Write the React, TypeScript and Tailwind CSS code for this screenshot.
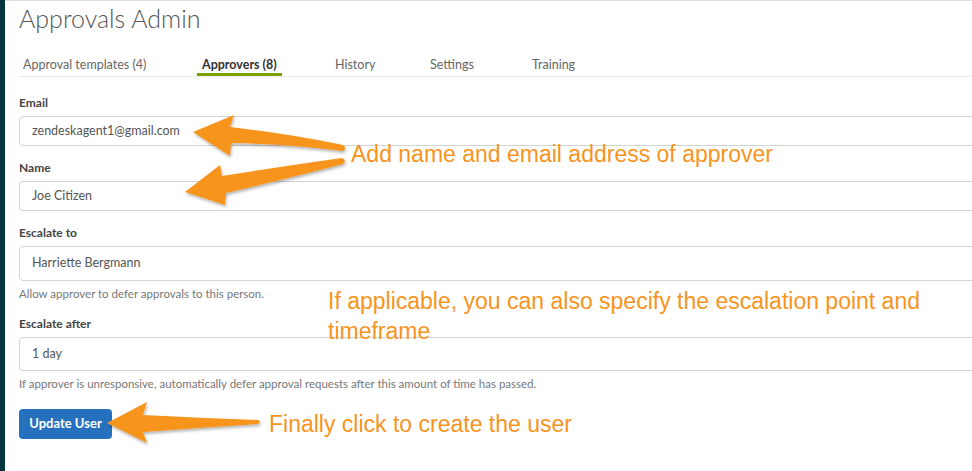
const tabs = [
  { label: 'Approval templates (4)', width: 'w-[179px]' },
  { label: 'Approvers (8)', width: 'w-[133px]', active: true },
  { label: 'History', width: 'w-[95px]' },
  { label: 'Settings', width: 'w-[102px]' },
  { label: 'Training', width: 'w-[120px]' },
];

function Field({ label, value, height, hint }: { label: string; value: string; height: string; hint?: string }) {
  return (
    <div>
      <label className="block text-[12px] font-bold leading-[18px] text-[#444444]">{label}</label>
      <div
        className={`mt-[4px] flex ${height} items-center rounded-[4px] border border-[#d4d4d4] pl-[12px] text-[12.5px] text-[#555555]`}
      >
        {value}
      </div>
      {hint && <p className="mt-[5px] text-[11.5px] leading-[16px] text-[#777777]">{hint}</p>}
    </div>
  );
}

export default function App() {
  return (
    <div className="relative flex h-[471px] w-[972px] overflow-hidden bg-white font-['Lato',sans-serif]">
      {/* dark app rail */}
      <div className="w-[5px] shrink-0 bg-[#03363d]" />

      <main className="w-[1100px] shrink-0 border-t border-[#dddddd] pl-[14px]">
        <h1 className="mt-[2px] text-[25px] font-light leading-[30px] text-[#555555]">Approvals Admin</h1>

        <nav className="-ml-[1px] mt-[20px] flex border-b border-[#ececec] text-[12.5px] text-[#666666]">
          {tabs.map((t) => (
            <div key={t.label} className={`${t.width} shrink-0`}>
              <span
                className={`inline-block border-b-[3px] px-[5px] pt-[3px] leading-[17px] ${
                  t.active ? 'border-[#78a300] font-bold text-[#333333]' : 'border-transparent'
                }`}
              >
                {t.label}
              </span>
            </div>
          ))}
        </nav>

        <form className="mt-[17px] flex flex-col gap-[13px]">
          <Field label="Email" value="zendeskagent1@gmail.com" height="h-[30px]" />
          <Field label="Name" value="Joe Citizen" height="h-[30px]" />
          <Field
            label="Escalate to"
            value="Harriette Bergmann"
            height="h-[35px]"
            hint="Allow approver to defer approvals to this person."
          />
          <Field
            label="Escalate after"
            value="1 day"
            height="h-[34px]"
            hint="If approver is unresponsive, automatically defer approval requests after this amount of time has passed."
          />
          <div className="pt-[4px]">
            <button
              type="button"
              className="h-[30px] w-[93px] rounded-[4px] bg-[#2671bd] text-[13px] font-bold text-white"
            >
              Update User
            </button>
          </div>
        </form>
      </main>

      {/* annotation layer */}
      <svg className="pointer-events-none absolute inset-0" width="972" height="471" viewBox="0 0 972 471">
        <defs>
          <filter id="sh" x="-10%" y="-40%" width="130%" height="180%">
            <feDropShadow dx="1" dy="2" stdDeviation="1.5" floodColor="#000000" floodOpacity="0.3" />
          </filter>
        </defs>
        <g fill="#f7941e" filter="url(#sh)">
          <path d="M193 132 L234 115 L230 127 Q290 134 343 145 Q347 148 343 151 Q290 144 231 143 L230 156 Z" />
          <path d="M185 192 L220 165 L222 176 Q285 166 342 158 Q347 160 343 164 Q290 178 226 193 L225 205 Z" />
          <path d="M107 423 L147 402 L143 415 Q200 418 258 420 Q262 422 258 424 Q200 428 143 432 L147 443 Z" />
        </g>
      </svg>
      <p className="absolute left-[351px] top-[139px] whitespace-nowrap font-['Liberation_Sans',Arial,sans-serif] text-[23px] leading-[30px] text-[#f7941e]">
        Add name and email address of approver
      </p>
      <p className="absolute left-[328px] top-[286px] w-[610px] font-['Liberation_Sans',Arial,sans-serif] text-[23px] leading-[30px] text-[#f7941e]">
        If applicable, you can also specify the escalation point and timeframe
      </p>
      <p className="absolute left-[269px] top-[409px] whitespace-nowrap font-['Liberation_Sans',Arial,sans-serif] text-[23px] leading-[30px] text-[#f7941e]">
        Finally click to create the user
      </p>
    </div>
  );
}
